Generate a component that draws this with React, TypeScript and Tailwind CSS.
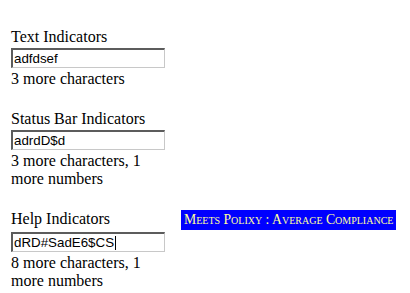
function FakeInput({ value, caret }: { value: string; caret?: boolean }) {
  return (
    <div className="mt-[2px] flex h-[20px] w-[154px] items-center border-t-2 border-l-2 border-r border-b border-t-[#5c5c5c] border-l-[#5c5c5c] border-r-[#c8c8c8] border-b-[#c8c8c8] bg-white pl-[1px] font-[family-name:'Liberation_Sans',Arial,sans-serif] text-[13.33px] leading-[16px] text-black">
      <span>{value}</span>
      {caret && <span className="ml-[1px] inline-block h-[14px] w-px bg-black" />}
    </div>
  );
}

function Section({
  label,
  value,
  lines,
  caret,
  badge,
}: {
  label: string;
  value: string;
  lines: string[];
  caret?: boolean;
  badge?: string;
}) {
  return (
    <div className="mb-[22px]">
      <div className="flex items-baseline">
        <span className="w-[170px]">{label}</span>
        {badge && (
          <span className="bg-[#0000ff] px-[3px] py-[2px] text-[13.7px] leading-[16px] text-[#ffff9c] [font-variant:small-caps]">
            {badge}
          </span>
        )}
      </div>
      <FakeInput value={value} caret={caret} />
      <div className="mt-[2px]">
        {lines.map((l) => (
          <div key={l}>{l}</div>
        ))}
      </div>
    </div>
  );
}

export default function App() {
  return (
    <div className="min-h-[293px] bg-white pl-[11px] pt-[28px] font-[family-name:'Liberation_Serif','Times_New_Roman',serif] text-[16px] leading-[18px] text-black">
      <Section label="Text Indicators" value="adfdsef" lines={["3 more characters"]} />
      <Section
        label="Status Bar Indicators"
        value="adrdD$d"
        lines={["3 more characters, 1", "more numbers"]}
      />
      <Section
        label="Help Indicators"
        value="dRD#SadE6$CS"
        caret
        badge="Meets Polixy : Average Compliance"
        lines={["8 more characters, 1", "more numbers"]}
      />
    </div>
  );
}
